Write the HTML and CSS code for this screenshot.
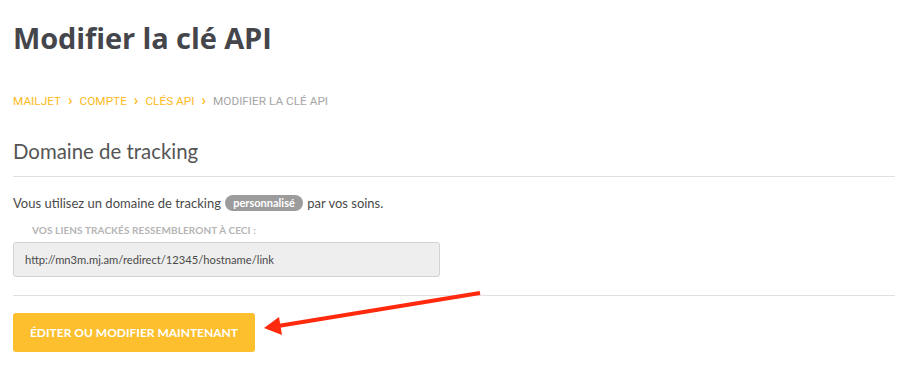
FILE: index.html
```html
<!DOCTYPE html>
<html lang="fr">
<head>
<meta charset="utf-8">
<title>Modifier la clé API</title>
<link rel="stylesheet" href="styles.css">
</head>
<body>
<div class="page">
  <h1 class="title">Modifier la clé API</h1>
  <nav class="crumbs">
    <a class="crumb">MAILJET</a><span class="sep">›</span>
    <a class="crumb">COMPTE</a><span class="sep">›</span>
    <a class="crumb">CLÉS API</a><span class="sep">›</span>
    <span class="crumb current">MODIFIER LA CLÉ API</span>
  </nav>
  <h2 class="section">Domaine de tracking</h2>
  <div class="rule"></div>
  <p class="desc">Vous utilisez un domaine de tracking <span class="badge">personnalisé</span> par vos soins.</p>
  <div class="label">VOS LIENS TRACKÉS RESSEMBLERONT À CECI :</div>
  <div class="field">http://mn3m.mj.am/redirect/12345/hostname/link</div>
  <div class="rule rule2"></div>
  <div class="actions">
    <button class="btn">ÉDITER OU MODIFIER MAINTENANT</button>
  </div>
  <svg class="arrow" width="240" height="60" viewBox="0 0 240 60">
    <line x1="224" y1="8" x2="22" y2="41" stroke="#ff2a0e" stroke-width="4"/>
    <polygon points="8,43 23,32 26,50" fill="#ff2a0e"/>
  </svg>
</div>
</body>
</html>
```
FILE: styles.css
```css
html, body { margin: 0; padding: 0; background: #fff; }
.page {
  position: relative;
  padding: 0 13px;
  font-family: Lato, "Open Sans", sans-serif;
  color: #555;
}
.title {
  margin: 0;
  padding-top: 17px;
  font-family: "Open Sans", "Noto Sans", sans-serif;
  font-size: 29px;
  font-weight: 700;
  color: #45464b;
  line-height: 42px;
  letter-spacing: -0.1px;
}
.crumbs {
  margin-top: 34px;
  font-family: Roboto, "Liberation Sans", sans-serif;
  font-size: 11.8px;
  line-height: 16px;
  display: flex;
  align-items: center;
}
.crumb { color: #fdba1c; text-decoration: none; }
.crumb.current { color: #a5a5a5; }
.sep {
  color: #fdba1c;
  font-weight: 700;
  font-size: 15px;
  margin: 0 7px;
  line-height: 16px;
  position: relative;
  top: -1px;
}
.section {
  margin: 28px 0 0;
  font-size: 20.4px;
  font-weight: 400;
  color: #555;
  line-height: 28px;
}
.rule {
  height: 1px;
  background: #e0e0e0;
  margin-top: 11px;
}
.desc {
  margin: 16px 0 0;
  font-size: 13px;
  line-height: 20px;
  color: #4a4a4a;
}
.badge {
  display: inline-block;
  background: #9c9c9c;
  color: #fff;
  font-weight: 700;
  font-size: 11px;
  line-height: 16px;
  padding: 0 8px;
  border-radius: 8px;
  vertical-align: 1px;
  margin: 0 1px;
}
.label {
  margin: 10px 0 0 19px;
  font-size: 10px;
  font-weight: 700;
  color: #b5b5b5;
  letter-spacing: 0.1px;
  line-height: 14px;
}
.field {
  margin-top: 5px;
  width: 403px;
  height: 33px;
  line-height: 33px;
  padding: 0 11px;
  background: #eeeeee;
  border: 1px solid #d2d2d2;
  border-radius: 3px;
  font-size: 11.2px;
  color: #4a4a4a;
}
.rule2 { margin-top: 18px; }
.actions {
  display: flex;
  margin-top: 17px;
}
.btn {
  width: 242px;
  height: 39px;
  background: #fdbf2d;
  border: none;
  border-radius: 3px;
  color: #fff;
  font-family: Lato, "Open Sans", sans-serif;
  font-weight: 700;
  font-size: 12px;
  letter-spacing: 0;
  padding: 0;
}
.arrow {
  position: absolute;
  left: 256px;
  top: 285px;
}
```
